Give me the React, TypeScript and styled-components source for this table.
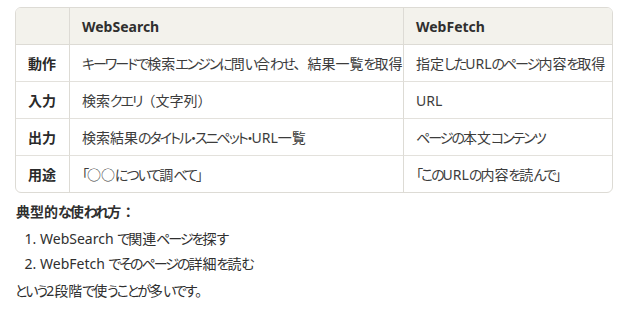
import React from 'react';
import styled, { createGlobalStyle } from 'styled-components';

const GlobalStyle = createGlobalStyle`
  body {
    margin: 0;
    background: #ffffff;
    font-family: 'Noto Sans', 'Noto Sans CJK JP', sans-serif;
    color: #2f2f2f;
  }
`;

const Page = styled.div`
  padding: 7px 10px 0 15px;
  font-size: 14px;
`;

// kana runs are set proportional and tighter, like the reference UI font
const Kana = styled.span`
  font-feature-settings: 'palt';
  letter-spacing: -2px;
`;

const KANA = /([\u3040-\u30ff\u300c\u300d]+)/;

function Jp({ text }: { text: string }) {
  return (
    <>
      {text.split(KANA).map((part, i) =>
        i % 2 === 1 ? <Kana key={i}>{part}</Kana> : part
      )}
    </>
  );
}

const Table = styled.table`
  width: 598px;
  table-layout: fixed;
  border-collapse: separate;
  border-spacing: 0;
  border: 1px solid #dddbd5;
  border-radius: 6px;
  overflow: hidden;
`;

const HeadCell = styled.th`
  height: 36px;
  padding: 0 12px;
  text-align: left;
  font-weight: 700;
  white-space: nowrap;
  color: #2f2f2f;
  background: #f3f2ec;
  border-bottom: 1px solid #dddbd5;
  & + & {
    border-left: 1px solid #dddbd5;
  }
`;

const Cell = styled.td<{ $label?: boolean; $last?: boolean }>`
  height: 36px;
  padding: 0 12px;
  white-space: nowrap;
  font-weight: ${(p) => (p.$label ? 700 : 400)};
  color: ${(p) => (p.$label ? '#2a2a2a' : '#3c3c3c')};
  border-bottom: ${(p) => (p.$last ? 'none' : '1px solid #e3e1dc')};
  & + & {
    border-left: 1px solid #dddbd5;
  }
`;

const Heading = styled.div`
  margin-top: 7px;
  padding-left: 1px;
  font-weight: 700;
  line-height: 24px;
`;

const Steps = styled.ol`
  margin: 2px 0 0;
  padding-left: 25px;
  line-height: 25px;
`;

const Note = styled.p`
  margin: 3px 0 0;
  line-height: 24px;
`;

const rows = [
  ['動作', 'キーワードで検索エンジンに問い合わせ、結果一覧を取得', '指定したURLのページ内容を取得'],
  ['入力', '検索クエリ（文字列）', 'URL'],
  ['出力', '検索結果のタイトル・スニペット・URL一覧', 'ページの本文コンテンツ'],
  ['用途', '「○○について調べて」', '「このURLの内容を読んで」'],
];

export default function App() {
  return (
    <Page>
      <GlobalStyle />
      <Table>
        <colgroup>
          <col style={{ width: 53 }} />
          <col style={{ width: 334 }} />
          <col />
        </colgroup>
        <thead>
          <tr>
            <HeadCell />
            <HeadCell>WebSearch</HeadCell>
            <HeadCell>WebFetch</HeadCell>
          </tr>
        </thead>
        <tbody>
          {rows.map((r, i) => (
            <tr key={r[0]}>
              <Cell $label $last={i === rows.length - 1}>{r[0]}</Cell>
              <Cell $last={i === rows.length - 1}><Jp text={r[1]} /></Cell>
              <Cell $last={i === rows.length - 1}><Jp text={r[2]} /></Cell>
            </tr>
          ))}
        </tbody>
      </Table>
      <Heading><Jp text="典型的な使われ方：" /></Heading>
      <Steps>
        <li>WebSearch <Jp text="で関連ページを探す" /></li>
        <li>WebFetch <Jp text="でそのページの詳細を読む" /></li>
      </Steps>
      <Note><Jp text="という2段階で使うことが多いです。" /></Note>
    </Page>
  );
}
